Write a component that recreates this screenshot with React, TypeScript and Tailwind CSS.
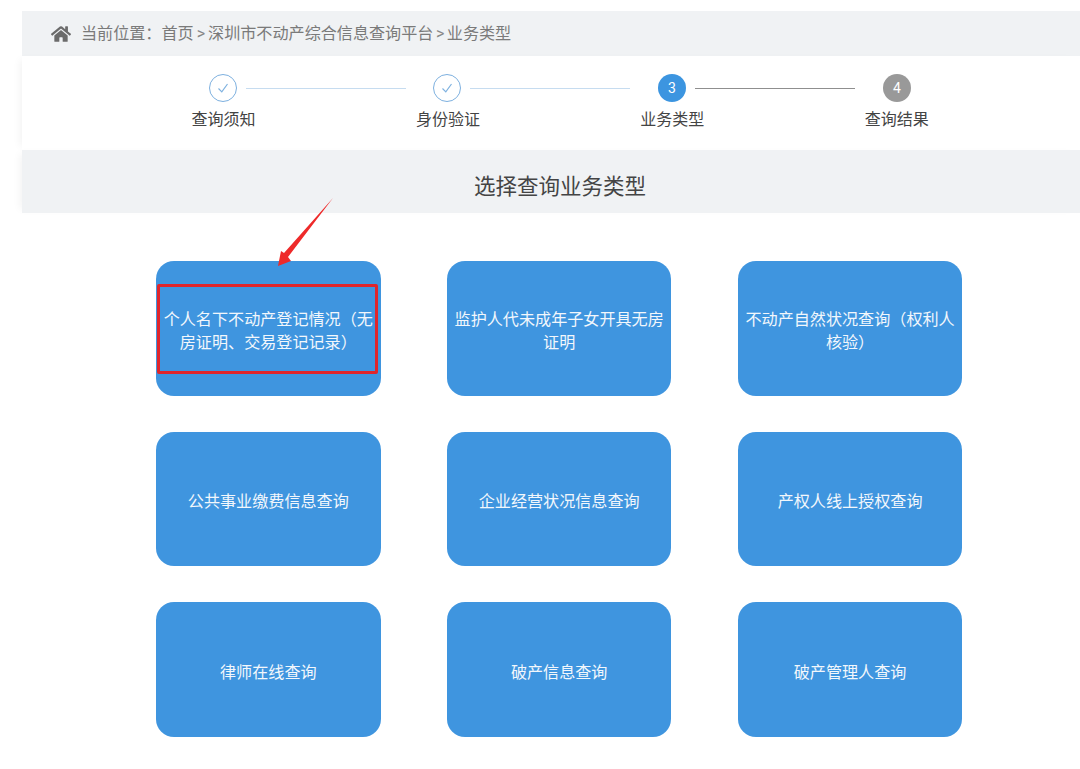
import { FaHome } from "react-icons/fa";

const cards = [
  "个人名下不动产登记情况（无房证明、交易登记记录）",
  "监护人代未成年子女开具无房证明",
  "不动产自然状况查询（权利人核验）",
  "公共事业缴费信息查询",
  "企业经营状况信息查询",
  "产权人线上授权查询",
  "律师在线查询",
  "破产信息查询",
  "破产管理人查询",
];

const steps = ["查询须知", "身份验证", "业务类型", "查询结果"];

function DoneCircle() {
  return (
    <div className="flex h-[28px] w-[28px] shrink-0 items-center justify-center rounded-full border-[1.5px] border-[#7db0df] bg-white">
      <svg width="14" height="14" viewBox="0 0 14 14" fill="none" stroke="#7fb2e0" strokeWidth="1.2">
        <path d="M2.5 7.5 L5.8 10.8 L11.5 3" />
      </svg>
    </div>
  );
}

function NumCircle({ n, color }: { n: number; color: string }) {
  return (
    <div className={`flex h-[28px] w-[28px] shrink-0 items-center justify-center rounded-full text-[14px] text-white ${color}`}>
      {n}
    </div>
  );
}

export default function App() {
  return (
    <div className="relative h-[769px] w-[1080px] overflow-hidden bg-white pl-[22px] pt-[11px] font-['Roboto','Noto_Sans_CJK_SC',sans-serif]">
      <div className="flex h-[45px] items-center bg-[#f0f2f4] pl-[29px] pt-px text-[16.1px] text-[#7a7a7a]">
        <FaHome className="mr-[10px] text-[20px] text-[#6b6b6b]" />
        <span>当前位置：</span>
        <span>首页</span>
        <span className="px-[3px] text-[#888]">&gt;</span>
        <span>深圳市不动产综合信息查询平台</span>
        <span className="px-[2.5px] text-[#888]">&gt;</span>
        <span>业务类型</span>
      </div>

      <div className="h-[94px] bg-white pt-[18px] shadow-[-6px_0_8px_-4px_rgba(0,0,0,0.05)]">
        <div className="flex items-center pl-[187px]">
          <DoneCircle />
          <div className="ml-[9px] mr-[27px] h-px w-[160px] bg-[#c6dcf0]" />
          <DoneCircle />
          <div className="ml-[9px] mr-[28px] h-px w-[160px] bg-[#c6dcf0]" />
          <NumCircle n={3} color="bg-[#3c95e0]" />
          <div className="ml-[9px] mr-[28px] h-px w-[160px] bg-[#8f8f8f]" />
          <NumCircle n={4} color="bg-[#999999]" />
        </div>
        <div className="mt-[6px] flex pl-[89.3px]">
          {steps.map((s) => (
            <div key={s} className="w-[224.4px] text-center text-[16px] leading-[24px] text-[#444]">
              {s}
            </div>
          ))}
        </div>
      </div>

      <div className="flex h-[63px] items-center justify-center bg-[#f0f2f4] pl-[18px] pt-[12px] text-[21.5px] text-[#444] shadow-[-6px_0_8px_-4px_rgba(0,0,0,0.05)]">
        选择查询业务类型
      </div>

      <div className="grid grid-cols-[224.6px_224.6px_224.6px] gap-x-[66.3px] gap-y-[36px] pl-[134px] pt-[48px]">
        {cards.map((c) => (
          <div
            key={c}
            className="flex h-[134.5px] items-center justify-center rounded-[18px] bg-[#3f95df] px-[7px] pt-[6px] text-center text-[16.1px] leading-[23px] text-[#f2f7fc]"
          >
            {c}
          </div>
        ))}
      </div>

      {/* annotation drawn on top of the screenshot */}
      <div className="absolute left-[157px] top-[284px] h-[90px] w-[221px] rounded-[2px] border-[3px] border-[#e0252b]" />
      <svg className="absolute left-[270px] top-[195px]" width="66" height="75" viewBox="0 0 66 75">
        <path d="M63 3 L14 58 L11 56 L8 71 L21 66 L18 62 Z" fill="#ee2a2a" />
      </svg>
    </div>
  );
}
